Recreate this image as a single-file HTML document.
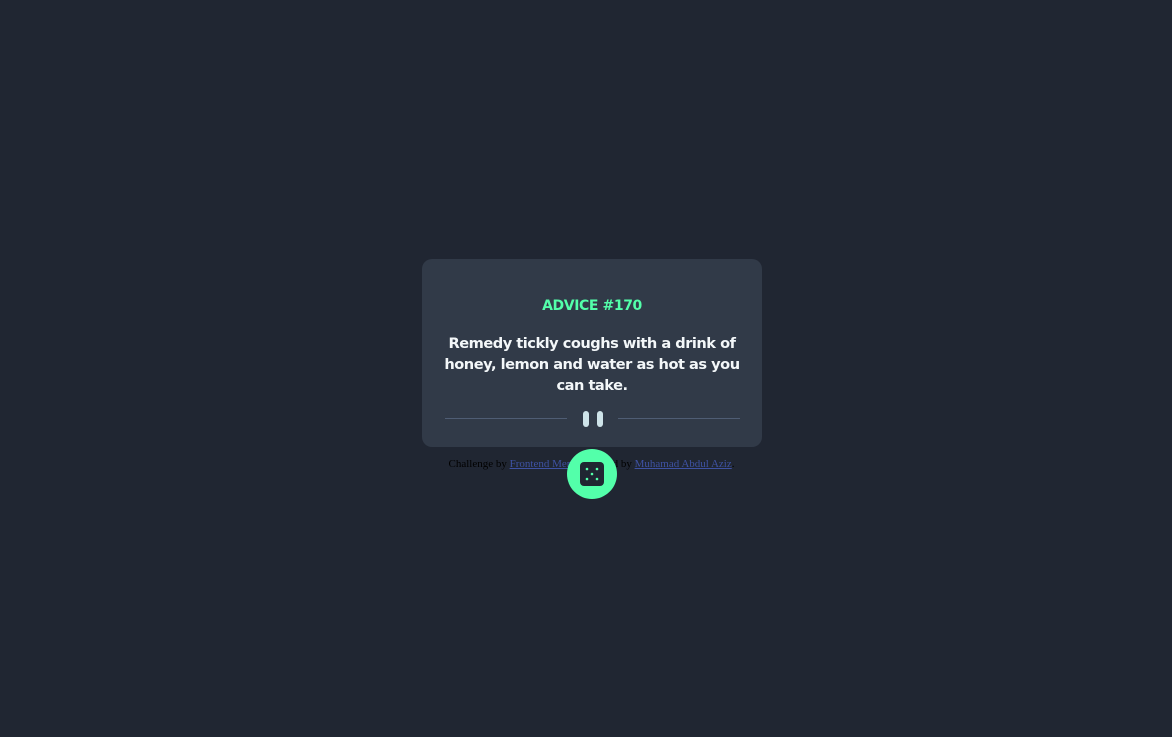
<!DOCTYPE html>
<html><head><meta charset="utf-8"><style>
html,body{margin:0;padding:0;width:1172px;height:737px;background:#202632;overflow:hidden;position:relative}
.card{position:absolute;left:422px;top:259px;width:340px;height:188px;background:#313a48;border-radius:10px;text-align:center;font-family:"DejaVu Sans","Liberation Sans",sans-serif;font-weight:bold}
.lbl{position:absolute;top:39px;left:0;right:0;color:#53ffaa;font-size:14px;letter-spacing:-0.4px}
.q{position:absolute;top:74px;left:10px;right:10px;color:#f3f7f9;font-size:14.6px;line-height:21px;letter-spacing:-0.5px}
.ln{position:absolute;top:159px;height:1px;background:#4f5d74}
.bar{position:absolute;top:152px;width:6px;height:16px;border-radius:3px;background:#cee3e9}
.foot{position:absolute;top:458px;left:0;width:1183px;text-align:center;font-family:"Liberation Serif",serif;font-size:11px;color:#000}
.foot a{color:#3e52a3;text-decoration:underline}
.dice{position:absolute;left:567px;top:449px;width:50px;height:50px;border-radius:50%;background:#53ffaa}
</style></head><body>
<div class="card">
<div class="lbl">ADVICE #170</div>
<div class="q">Remedy tickly coughs with a drink of honey, lemon and water as hot as you can take.</div>
<div class="ln" style="left:23px;width:122px"></div>
<div class="ln" style="left:196px;width:122px"></div>
<div class="bar" style="left:161px"></div>
<div class="bar" style="left:175px"></div>
</div>
<div class="foot">Challenge by <a>Frontend Mentor</a>. Coded by <a>Muhamad Abdul Aziz</a>.</div>
<div class="dice"><svg width="50" height="50" viewBox="0 0 50 50"><rect x="13" y="13" width="24" height="24" rx="4" fill="#202632"/><g fill="#53ffaa"><circle cx="20" cy="20" r="1.3"/><circle cx="30" cy="20" r="1.3"/><circle cx="25" cy="25" r="1.3"/><circle cx="20" cy="30" r="1.3"/><circle cx="30" cy="30" r="1.3"/></g></svg></div>
</body></html>
